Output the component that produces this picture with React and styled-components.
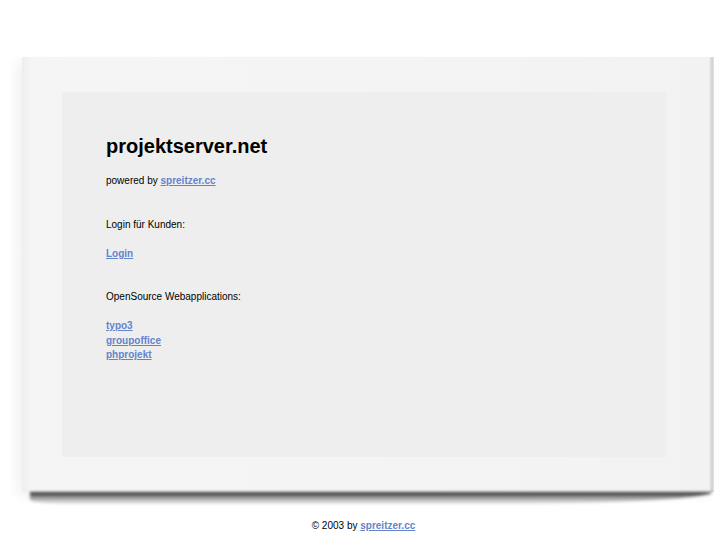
import React from "react";
import styled, { createGlobalStyle } from "styled-components";

const GlobalStyle = createGlobalStyle`
  body {
    margin: 0;
    background: #ffffff;
    font-family: "Liberation Sans", Arial, Helvetica, sans-serif;
    color: #000;
  }
`;

function App() {
  return (
    <>
      <GlobalStyle />
      <Page>
        <Sheet>
          <Panel>
            <Title>projektserver.net</Title>
            <Line>
              powered by <Link href="#">spreitzer.cc</Link>
            </Line>

            <Section>
              <Line>Login für Kunden:</Line>
              <Links>
                <Link href="#">Login</Link>
              </Links>
            </Section>

            <Section>
              <Line>OpenSource Webapplications:</Line>
              <Links>
                <Link href="#">typo3</Link>
                <Link href="#">groupoffice</Link>
                <Link href="#">phprojekt</Link>
              </Links>
            </Section>
          </Panel>
        </Sheet>
        <Footer>
          © 2003 by <Link href="#">spreitzer.cc</Link>
        </Footer>
      </Page>
    </>
  );
}

export default App;

const Page = styled.div`
  width: 727px;
  padding-top: 57px;
  display: flex;
  flex-direction: column;
`;

const Sheet = styled.div`
  position: relative;
  margin-left: 22px;
  width: 692px;
  height: 435px;
  box-sizing: border-box;
  padding: 35px 48px 35px 40px;
  background: linear-gradient(
    90deg,
    #eeeeee 0px,
    #f5f5f5 10px,
    #f4f4f4 400px,
    #f2f2f2 687px,
    #cfcfcf 690px,
    #e4e4e4 692px
  );
  box-shadow: -6px 4px 10px rgba(0, 0, 0, 0.05);

  &::after {
    content: "";
    position: absolute;
    left: 8px;
    right: 2px;
    bottom: -13px;
    height: 13px;
    background: linear-gradient(
      180deg,
      rgba(0, 0, 0, 0.85) 0%,
      rgba(0, 0, 0, 0.4) 40%,
      rgba(0, 0, 0, 0) 100%
    );
    filter: blur(1.5px);
    border-radius: 0 0 40% 10% / 0 0 100% 40%;
  }
`;

const Panel = styled.div`
  height: 100%;
  box-sizing: border-box;
  background: #eeeeee;
  padding: 43px 44px;
`;

const Title = styled.h1`
  margin: 0 0 16px;
  font-size: 20px;
  line-height: 23px;
  font-weight: bold;
  letter-spacing: 0;
`;

const Line = styled.div`
  font-size: 10px;
  line-height: 14.5px;
`;

const Section = styled.div`
  margin-top: 29px;
  display: flex;
  flex-direction: column;
  gap: 14.5px;
`;

const Links = styled.div`
  display: flex;
  flex-direction: column;
  font-size: 10px;
  line-height: 14.5px;
`;

const Link = styled.a`
  color: #6384cc;
  font-weight: bold;
  text-decoration: underline;
  font-size: 10px;
`;

const Footer = styled.div`
  margin-top: 27px;
  text-align: center;
  font-size: 10px;
  line-height: 14px;
`;
